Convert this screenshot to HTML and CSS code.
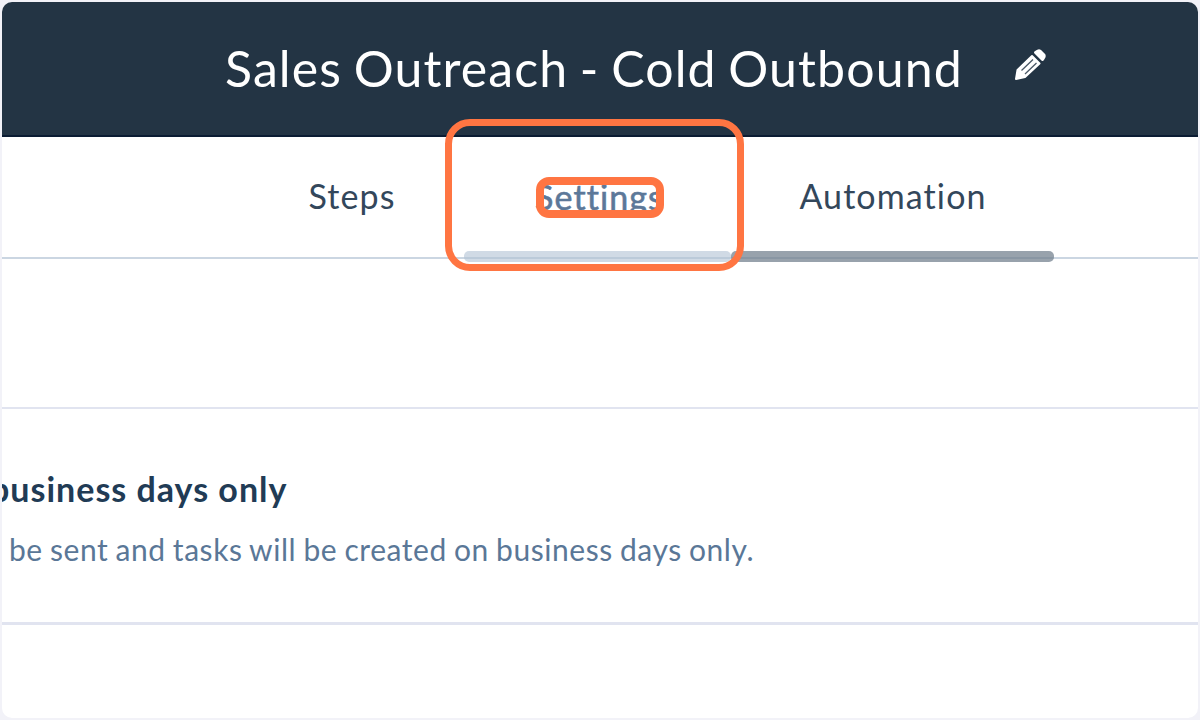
FILE: index.html
```
<!DOCTYPE html>
<html lang="en">

<head>
    <meta charset="UTF-8">
    <meta name="viewport" content="width=device-width, initial-scale=1.0">
    <title>Sales Outreach - Cold Outbound</title>
    <link rel="stylesheet" href="styles.css">
</head>

<body>
    <div class="frame">
        <header class="header">
            <h1 class="title">Sales Outreach - Cold Outbound</h1>
            <svg class="pencil" width="34" height="34" viewBox="0 0 34 34">
                <path fill="#fff" stroke="#fff" stroke-width="2" stroke-linejoin="round" d="M3 31L4.500 22L19 8L26.500 15.500L12 29Z" />
                <path fill="#fff" stroke="#fff" stroke-width="3" stroke-linejoin="round" d="M22.500 4.500L25 3Q26 2.500 27 3L31 7Q31.500 8 31 9L29.500 11.500Z" />
                <path fill="none" stroke="#4b5967" stroke-width="1.300" d="M8.500 22.500L20 11.500M12 26L23.500 15" />
            </svg>
        </header>

        <nav class="tabs">
            <a class="tab steps"><span>Steps</span></a>
            <a class="tab settings"><span>Settings</span></a>
            <a class="tab automation"><span>Automation</span></a>
            <div class="mark mark-tab"></div>
            <div class="mark mark-text"></div>
        </nav>

        <div class="spacer"></div>

        <section class="setting">
            <h2>business days only</h2>
            <p>be sent and tasks will be created on business days only.</p>
        </section>
    </div>
</body>

</html>
```
FILE: styles.css
```
* {
    box-sizing: border-box;
}

body {
    margin: 0;
    background-color: #f2f2f8;
    font-family: Lato, "Liberation Sans", sans-serif;
}

.frame {
    height: 720px;
    border: 2px solid #f2f2f8;
    border-radius: 12px;
    background-color: #fff;
    overflow: hidden;
}

.header {
    display: flex;
    height: 135px;
    padding: 36px 0 0 223px;
    background-color: #233444;
    border-bottom: 2px solid #0b1c33;
}

.title {
    width: 788px;
    margin: 0;
    font-size: 50px;
    font-weight: 400;
    line-height: 60px;
    letter-spacing: 1.1px;
    word-spacing: -2.2px;
    white-space: nowrap;
    color: #fff;
}

.pencil {
    margin-top: 10px;
}

.tabs {
    position: relative;
    display: flex;
    height: 122px;
    padding-left: 238px;
    border-bottom: 2px solid #cbd6e2;
}

.tab {
    position: relative;
    padding-top: 38px;
    font-size: 34px;
    line-height: 42px;
    letter-spacing: 1.1px;
    text-align: center;
    color: #33475b;
}

.steps {
    width: 224px;
}

.settings {
    width: 267px;
    padding-top: 39px;
    padding-left: 4px;
    color: #5c7899;
    -webkit-text-stroke: .6px #5c7899;
}

.automation {
    width: 323px;
    padding-left: 1px;
}

/* underline bars sit over the nav border */
.settings::after,
.automation::after {
    content: "";
    position: absolute;
    left: 0;
    right: 0;
    bottom: -5px;
    height: 11px;
    border-radius: 5px;
    background-color: rgba(176, 193, 212, .6);
}

.automation::after {
    background-color: rgba(108, 123, 137, .7);
}

.mark {
    position: absolute;
    border: 7px solid #ff7542;
}

.mark-tab {
    left: 443px;
    top: -18px;
    width: 299px;
    height: 152px;
    border-radius: 25px;
}

.mark-text {
    left: 534px;
    top: 40px;
    width: 128px;
    height: 41px;
    border-width: 8px;
    border-radius: 13px;
}

.spacer {
    height: 150px;
    border-bottom: 2px solid #e1e4f0;
}

.setting {
    height: 216px;
    padding-top: 59px;
    border-bottom: 3px solid #e1e4f0;
    white-space: nowrap;
}

.setting h2 {
    margin: 0 0 0 -12px;
    font-size: 34px;
    line-height: 42px;
    letter-spacing: 1px;
    color: #213b55;
}

.setting p {
    margin: 21px 0 0 7px;
    font-size: 30px;
    line-height: 36px;
    letter-spacing: .55px;
    word-spacing: -1px;
    color: #5a7797;
}
```
